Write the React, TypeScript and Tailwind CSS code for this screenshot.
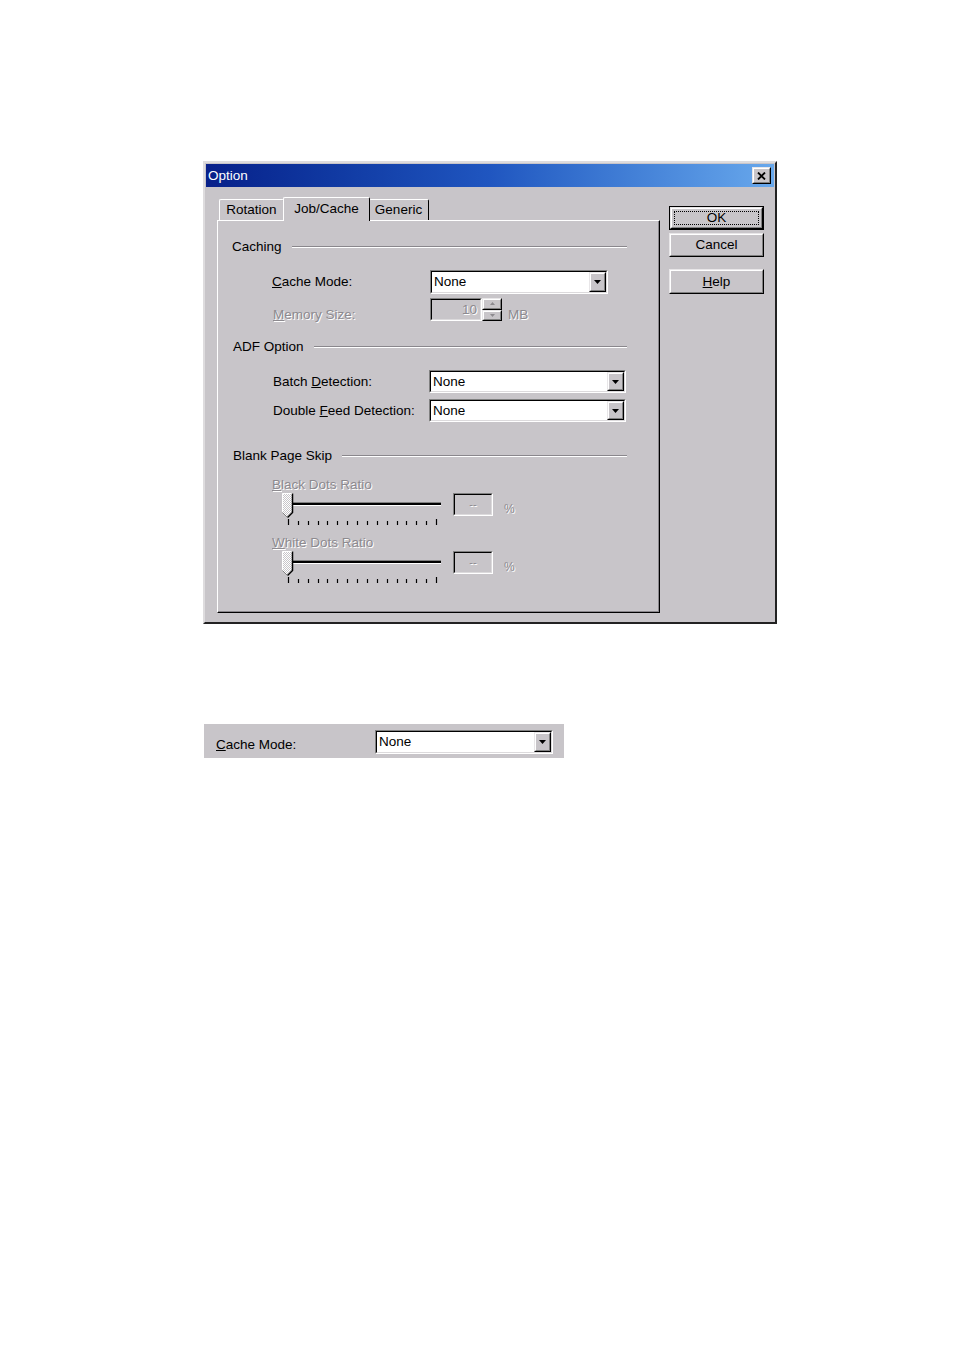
import React from "react";

const BG = "bg-[#c8c5c9]";

type BoxProps = { className?: string; children?: React.ReactNode; disabled?: boolean };

// sunken 2px win32 field
const Sunken = ({ className = "", children, disabled }: BoxProps) => (
  <div className={`border border-t-[#808080] border-l-[#808080] border-b-white border-r-white ${className}`}>
    <div
      className={`flex h-full w-full items-center border border-t-black border-l-black border-b-[#dcdadc] border-r-[#dcdadc] ${
        disabled ? "bg-[#c8c5c9]" : "bg-white"
      }`}
    >
      {children}
    </div>
  </div>
);

// raised 2px win32 bevel
const Raised = ({ className = "", children }: BoxProps) => (
  <div className={`border border-t-[#e8e6e8] border-l-[#e8e6e8] border-b-black border-r-black ${BG} ${className}`}>
    <div className="flex h-full w-full items-center justify-center border border-t-white border-l-white border-b-[#808080] border-r-[#808080]">
      {children}
    </div>
  </div>
);

const Combo = ({ className = "" }: { className?: string }) => (
  <Sunken className={className}>
    <span className="flex-1 pl-[2px] text-[13.5px] leading-none">None</span>
    <Raised className="h-full w-[17px]">
      <svg width="7" height="4" viewBox="0 0 7 4">
        <path d="M0 0h7L3.5 4z" fill="#000" />
      </svg>
    </Raised>
  </Sunken>
);

const dis = "text-[#8d8a8f] [text-shadow:1px_1px_0_#ffffff]";

const GroupHeader = ({ label, className = "" }: { label: string; className?: string }) => (
  <div className={`flex h-[16px] items-center pr-[31px] ${className}`}>
    <span className="text-[13.5px] leading-none">{label}</span>
    <div className="ml-[10px] flex-1 border-t border-b border-t-[#8a878c] border-b-white" />
  </div>
);

const Slider = ({ id }: { id: string }) => (
  <svg width="162" height="26" viewBox="0 0 162 26" className="block">
    <defs>
      <pattern id={id} width="2" height="2" patternUnits="userSpaceOnUse">
        <rect width="2" height="2" fill="#c8c5c9" />
        <rect width="1" height="1" fill="#ffffff" />
        <rect x="1" y="1" width="1" height="1" fill="#ffffff" />
      </pattern>
    </defs>
    <rect x="6" y="9" width="153" height="1" fill="#808080" />
    <rect x="6" y="10" width="153" height="2" fill="#000" />
    <rect x="6" y="12" width="153" height="1" fill="#fff" />
    <path d="M0.5 0.5H10.5V19.5L5.5 24.5L0.5 19.5Z" fill={`url(#${id})`} />
    <path d="M0.5 19.5V0.5H10.5" stroke="#fff" fill="none" />
    <path d="M10.5 0.5V19.5L5.5 24.5" stroke="#000" fill="none" strokeWidth="1.5" />
    <path d="M0.5 19.5L5.5 24.5" stroke="#808080" fill="none" />
  </svg>
);

const Ticks = () => (
  <svg width="162" height="7" viewBox="0 0 162 7" className="block">
    {Array.from({ length: 16 }).map((_, i) => {
      const x = Math.round(6 + (i * 148) / 15) + 0.5;
      const long = i === 0 || i === 15;
      return <line key={i} x1={x} x2={x} y1={long ? 0 : 2} y2={6} stroke="#000" strokeWidth="1.2" />;
    })}
  </svg>
);

const RatioRow = ({ label, mn, id }: { label: string; mn: string; id: string }) => (
  <>
    <div className={`mt-[9px] flex h-[16px] items-center pl-[54px] text-[13.5px] leading-none ${dis}`}>
      <span className="underline">{mn}</span>
      {label}
    </div>
    <div className="flex h-[26px] items-start pl-[64px]">
      <Slider id={id} />
      <Sunken disabled className="ml-[9px] h-[23px] w-[40px]">
        <span className={`w-full text-center text-[11px] leading-none ${dis}`}>--</span>
      </Sunken>
      <span className={`ml-[11px] mt-[10px] text-[12px] leading-none ${dis}`}>%</span>
    </div>
    <div className="pl-[64px]">
      <Ticks />
    </div>
  </>
);

const Spin = () => (
  <div className="flex h-[23px] items-stretch">
    <Sunken disabled className="h-full w-[52px]">
      <span className={`w-full pr-[3px] text-right text-[13.5px] leading-none ${dis}`}>10</span>
    </Sunken>
    <div className="flex w-[20px] flex-col">
      <Raised className="h-1/2 w-full">
        <svg width="5" height="3" viewBox="0 0 5 3">
          <path d="M0 3h5L2.5 0z" fill="#8d8a8f" />
        </svg>
      </Raised>
      <Raised className="h-1/2 w-full">
        <svg width="5" height="3" viewBox="0 0 5 3">
          <path d="M0 0h5L2.5 3z" fill="#8d8a8f" />
        </svg>
      </Raised>
    </div>
    <span className={`ml-[6px] mt-[10px] text-[13.5px] leading-none ${dis}`}>MB</span>
  </div>
);

const Btn = ({ children, className = "" }: BoxProps) => (
  <Raised className={`w-[95px] text-[13.5px] leading-none ${className}`}>{children}</Raised>
);

export default function App() {
  return (
    <div className="h-[1351px] w-[954px] bg-white font-['Liberation_Sans',Arial,sans-serif] text-black">
      <div className="h-[161px]" />
      {/* dialog */}
      <div className={`ml-[203px] h-[463px] w-[574px] border-2 border-t-[#dedcde] border-l-[#dedcde] border-b-[#222] border-r-[#222] p-px ${BG}`}>
        {/* title bar */}
        <div className="flex h-[23px] items-center bg-gradient-to-r from-[#08208a] via-[#2056c0] to-[#68a8ec] pl-[2px] pr-[3px]">
          <span className="flex-1 text-[13.5px] leading-none text-white">Option</span>
          <Raised className="h-[17px] w-[19px]">
            <svg width="9" height="8" viewBox="0 0 9 8">
              <path d="M1 0.5L8 7.5M8 0.5L1 7.5" stroke="#000" strokeWidth="1.8" />
            </svg>
          </Raised>
        </div>

        <div className="flex pl-[11px] pt-[10px]">
          {/* tabs + panel */}
          <div className="flex w-[443px] flex-col">
            <div className="flex h-[23px] items-end pl-[2px]">
              <div className="flex h-[21px] w-[65px] items-center justify-center rounded-t-[2px] border-t border-l border-r border-t-white border-l-white border-r-[#555] text-[13.5px] leading-none">
                Rotation
              </div>
              <div className={`relative z-10 -mb-px -ml-px flex h-[24px] w-[87px] items-start justify-center rounded-t-[2px] border-t border-l border-r border-t-white border-l-white border-r-black pt-[4px] text-[13.5px] leading-none ${BG}`}>
                Job/Cache
              </div>
              <div className="-ml-px flex h-[21px] w-[60px] items-center justify-center rounded-t-[2px] border-t border-r border-t-white border-r-black text-[13.5px] leading-none">
                Generic
              </div>
            </div>
            <div className="h-[393px] w-[443px] border border-t-white border-l-white border-b-black border-r-black">
              <div className="flex h-full w-full flex-col border-r border-b border-r-[#8a878c] border-b-[#8a878c]">
                <GroupHeader label="Caching" className="mt-[18px] pl-[14px]" />

                <div className="mt-[15px] flex h-[24px] items-center pl-[54px]">
                  <span className="w-[158px] text-[13.5px] leading-none">
                    <span className="underline">C</span>ache Mode:
                  </span>
                  <Combo className="h-[24px] w-[178px]" />
                </div>

                <div className="mt-[4px] flex h-[23px] items-start pl-[55px]">
                  <span className={`mt-[10px] w-[157px] text-[13.5px] leading-none ${dis}`}>
                    <span className="underline">M</span>emory Size:
                  </span>
                  <Spin />
                </div>

                <GroupHeader label="ADF Option" className="mt-[18px] pl-[15px]" />

                <div className="mt-[15px] flex h-[23px] items-center pl-[55px]">
                  <span className="w-[156px] text-[13.5px] leading-none">
                    Batch <span className="underline">D</span>etection:
                  </span>
                  <Combo className="h-[23px] w-[197px]" />
                </div>
                <div className="mt-[6px] flex h-[23px] items-center pl-[55px]">
                  <span className="w-[156px] text-[13.5px] leading-none">
                    Double <span className="underline">F</span>eed Detection:
                  </span>
                  <Combo className="h-[23px] w-[197px]" />
                </div>

                <GroupHeader label="Blank Page Skip" className="mt-[26px] pl-[15px]" />

                <div className="mt-[4px]" />
                <RatioRow mn="B" label="lack Dots Ratio" id="st1" />
                <RatioRow mn="W" label="hite Dots Ratio" id="st2" />
              </div>
            </div>
          </div>

          {/* buttons */}
          <div className="ml-[9px] mt-[9px] flex flex-col">
            <div className="h-[24px] w-[95px] border border-black">
              <Raised className="h-full w-full">
                <div className="flex h-[14px] w-[85px] items-center justify-center border border-dotted border-black text-[13.5px] leading-none">
                  OK
                </div>
              </Raised>
            </div>
            <Btn className="mt-[3px] h-[24px]">Cancel</Btn>
            <Btn className="mt-[12px] h-[25px]">
              <span className="underline">H</span>elp
            </Btn>
          </div>
        </div>
      </div>

      {/* detail strip */}
      <div className={`ml-[204px] mt-[100px] flex h-[34px] w-[360px] items-start pl-[12px] pt-[6px] ${BG}`}>
        <span className="mt-[8px] w-[159px] text-[13.5px] leading-none">
          <span className="underline">C</span>ache Mode:
        </span>
        <Combo className="h-[24px] w-[178px]" />
      </div>
    </div>
  );
}
